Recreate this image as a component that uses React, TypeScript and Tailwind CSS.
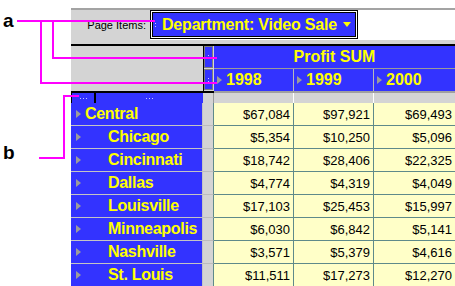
import React from "react";

type Row = { name: string; sub?: boolean; vals: string[] };

const rows: Row[] = [
  { name: "Central", vals: ["$67,084", "$97,921", "$69,493"] },
  { name: "Chicago", sub: true, vals: ["$5,354", "$10,250", "$5,096"] },
  { name: "Cincinnati", sub: true, vals: ["$18,742", "$28,406", "$22,325"] },
  { name: "Dallas", sub: true, vals: ["$4,774", "$4,319", "$4,049"] },
  { name: "Louisville", sub: true, vals: ["$17,103", "$25,453", "$15,997"] },
  { name: "Minneapolis", sub: true, vals: ["$6,030", "$6,842", "$5,141"] },
  { name: "Nashville", sub: true, vals: ["$3,571", "$5,379", "$4,616"] },
  { name: "St. Louis", sub: true, vals: ["$11,511", "$17,273", "$12,270"] },
];

const years = ["1998", "1999", "2000"];

// small grey "drill" arrow
function Tri() {
  return <span className="inline-block shrink-0 w-0 h-0 border-y-[4px] border-y-transparent border-l-[5px] border-l-[#9c9c9c]" />;
}

// vertical dotted grip
function Grip() {
  return (
    <span className="flex shrink-0 flex-col gap-[2px]">
      <i className="block w-px h-px bg-[#c8c8ff]" />
      <i className="block w-px h-px bg-[#c8c8ff]" />
    </span>
  );
}

// horizontal dotted grip
function Dots() {
  return (
    <span className="flex gap-[2px]">
      <i className="block w-px h-px bg-[#c8c8ff]" />
      <i className="block w-px h-px bg-[#c8c8ff]" />
      <i className="block w-px h-px bg-[#c8c8ff]" />
    </span>
  );
}

function Handle({ h }: { h: string }) {
  return (
    <div className={`${h} border-l border-black bg-[#d4d4d4] pr-px pb-px`}>
      <div className="h-full border border-[#7c7c7c] bg-[#3333ff] flex items-center justify-center">
        <Grip />
      </div>
    </div>
  );
}

export default function App() {
  return (
    <div className="relative w-[455px] h-[286px] overflow-hidden bg-white font-['Liberation_Sans',Arial,sans-serif]">
      <div className="ml-[71px] pt-[8px]">
        {/* Page items bar */}
        <div className="flex h-[32px] border-t-2 border-[#a3a3a3]">
          <div className="w-[79px] bg-[#d4d4d4] flex items-center justify-end pr-[4px] text-[11px] text-black">
            Page Items:
          </div>
          <div className="w-[208px] h-[29px] border border-black bg-white p-px">
            <div className="h-full border border-black bg-[#3333ff] flex items-center pl-[2px] overflow-hidden">
              <Grip />
              <span className="ml-[6px] shrink-0 whitespace-nowrap text-[16px] leading-none font-bold tracking-[-0.2px] text-[#ffff00]">
                Department: Video Sale
              </span>
              <span className="ml-[6px] shrink-0 inline-block w-0 h-0 border-x-[4px] border-x-transparent border-t-[5px] border-t-[#ffff00]" />
            </div>
          </div>
          <div className="flex-1 bg-white" />
        </div>
        <div className="h-[4px] bg-[#d4d4d4]" />
        <div className="h-[2px] bg-black" />

        {/* Column headers */}
        <div className="grid grid-cols-[132px_11px_241px]">
          <div className="h-[23px] bg-[#d4d4d4]" />
          <Handle h="h-[23px]" />
          <div className="h-[23px] bg-[#3333ff] border-b border-[#9a9a9a] flex items-center justify-center text-[16px] leading-none font-bold text-[#ffff00]">
            Profit SUM
          </div>

          <div className="h-[22px] bg-[#d4d4d4]" />
          <Handle h="h-[22px]" />
          <div className="grid grid-cols-[80px_80px_81px]">
            {years.map((y, i) => (
              <div
                key={y}
                className={`h-[22px] bg-[#3333ff] flex items-center pl-[3px] ${i < 2 ? "border-r border-[#b8b8b8]" : ""}`}
              >
                <Tri />
                <span className="ml-[4px] text-[16px] leading-none font-bold text-[#ffff00]">{y}</span>
              </div>
            ))}
          </div>
        </div>

        <div className="flex h-[2px]">
          <div className="w-[143px] bg-black" />
          <div className="flex-1 bg-[#a0a0a0]" />
        </div>

        {/* Row header handles */}
        <div className="grid grid-cols-[132px_11px_80px_80px_81px] h-[10px]">
          <div className="flex bg-black pl-px gap-[2px]">
            <div className="w-[22px] bg-[#3333ff] flex items-center justify-center"><Dots /></div>
            <div className="flex-1 bg-[#3333ff] flex items-center justify-center"><Dots /></div>
          </div>
          <div className="bg-[#d4d4d4] border-r border-[#9a9a9a]" />
          <div className="bg-[#d4d4d4] border-r border-white" />
          <div className="bg-[#d4d4d4] border-r border-white" />
          <div className="bg-[#d4d4d4]" />
        </div>

        {/* Data rows */}
        {rows.map((r) => (
          <div key={r.name} className="grid grid-cols-[132px_11px_80px_80px_81px] h-[23px]">
            <div className="bg-[#3333ff] border-b border-r border-[#c4c4c4] flex items-center pl-[5px] overflow-hidden">
              <Tri />
              <span
                className={`${r.sub ? "ml-[27px]" : "ml-[4px]"} text-[16px] leading-none font-bold tracking-[-0.3px] text-[#ffff00] whitespace-nowrap`}
              >
                {r.name}
              </span>
            </div>
            <div className="bg-[#d4d4d4] border-b border-[#bdbdbd] border-r border-r-[#5e8a8a]" />
            {r.vals.map((v, i) => (
              <div
                key={i}
                className={`bg-[#ffffc8] border-b border-[#5e8a8a] ${i < 2 ? "border-r" : ""} flex items-center justify-end pr-[3px] text-[13px] leading-none text-black`}
              >
                {v}
              </div>
            ))}
          </div>
        ))}
      </div>

      {/* callout labels */}
      <span className="absolute left-[3px] top-[11px] text-[19px] leading-none font-bold text-black">a</span>
      <span className="absolute left-[3px] top-[143px] text-[19px] leading-none font-bold text-black">b</span>

      {/* callout lines */}
      <svg className="absolute left-0 top-0 pointer-events-none" width="455" height="286">
        <g stroke="#ff00ff" strokeWidth="2" fill="none">
          <path d="M17 21H155M41 21V83H217M53 21V58H217" />
          <path d="M39 158H64V96H79" />
        </g>
      </svg>
    </div>
  );
}
